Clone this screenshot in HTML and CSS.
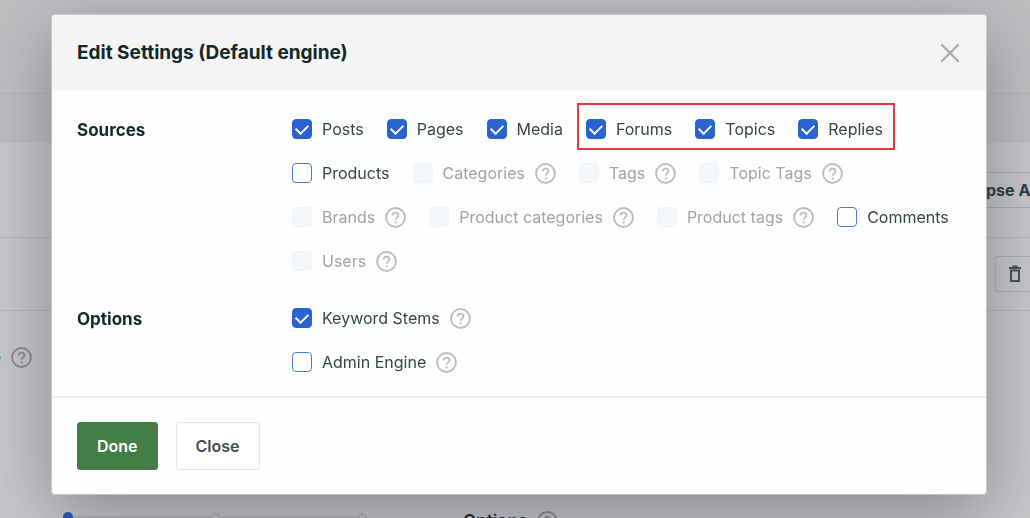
FILE: index.html
```html
<!DOCTYPE html>
<html lang="en">
<head>
<meta charset="utf-8">
<title>Edit Settings</title>
<link rel="stylesheet" href="styles.css">
</head>
<body>
<svg class="sprite" aria-hidden="true">
  <symbol id="help" viewBox="0 0 20 20">
    <circle cx="10" cy="10" r="9" fill="none" stroke="currentColor" stroke-width="1.800"/>
    <path d="M7.2 8.1C7.2 6.4 8.400 5.300 10 5.300C11.600 5.300 12.800 6.400 12.800 7.900C12.800 9.900 10.200 9.900 10.200 12.100" fill="none" stroke="currentColor" stroke-width="1.700"/>
    <circle cx="10.200" cy="14.600" r="1.100" fill="currentColor"/>
  </symbol>
</svg>

<main class="page">
  <div class="page-top"></div>
  <div class="page-bar"></div>
  <div class="page-toolbar"><a class="collapse" href="#">Collapse All</a></div>
  <div class="page-row">
    <button class="trash" type="button" aria-label="Delete">
      <svg width="14" height="18" viewBox="0 0 14 18" fill="none" stroke="currentColor" stroke-width="2"><path d="M1 3H13M4.500 1.500H9.500M3 5.500V16H11V5.500Z"/></svg>
    </button>
  </div>
  <div class="page-links"><a class="more" href="#">Default engine</a><svg class="help"><use href="#help"/></svg></div>
  <div class="page-bottom">
    <div class="track"><span class="dot current"></span><span class="rail"></span><span class="dot"></span><span class="rail"></span><span class="dot"></span></div>
    <div class="page-options">Options</div>
    <svg class="help"><use href="#help"/></svg>
  </div>
</main>

<div class="overlay">
  <section class="dialog" role="dialog" aria-labelledby="title">
    <header class="dialog-head">
      <h1 id="title">Edit Settings (Default engine)</h1>
      <button class="dismiss" type="button" aria-label="Close dialog">
        <svg width="20" height="20" viewBox="0 0 20 20" fill="none" stroke="currentColor" stroke-width="2.400" stroke-linecap="round"><path d="M2 2L18 18M18 2L2 18"/></svg>
      </button>
    </header>
    <div class="dialog-body">
      <div class="setting" role="group" aria-labelledby="sources">
        <h2 id="sources">Sources</h2>
        <div class="choices">
          <label class="choice"><input type="checkbox" checked>Posts</label>
          <label class="choice"><input type="checkbox" checked>Pages</label>
          <label class="choice"><input type="checkbox" checked>Media</label>
          <div class="marked">
            <label class="choice"><input type="checkbox" checked>Forums</label>
            <label class="choice"><input type="checkbox" checked>Topics</label>
            <label class="choice"><input type="checkbox" checked>Replies</label>
          </div>
          <label class="choice"><input type="checkbox">Products</label>
          <label class="choice off"><input type="checkbox" disabled>Categories<svg class="help"><use href="#help"/></svg></label>
          <label class="choice off"><input type="checkbox" disabled>Tags<svg class="help"><use href="#help"/></svg></label>
          <label class="choice off"><input type="checkbox" disabled>Topic Tags<svg class="help"><use href="#help"/></svg></label>
          <label class="choice off"><input type="checkbox" disabled>Brands<svg class="help"><use href="#help"/></svg></label>
          <label class="choice off"><input type="checkbox" disabled>Product categories<svg class="help"><use href="#help"/></svg></label>
          <label class="choice off"><input type="checkbox" disabled>Product tags<svg class="help"><use href="#help"/></svg></label>
          <label class="choice"><input type="checkbox">Comments</label>
          <label class="choice off"><input type="checkbox" disabled>Users<svg class="help"><use href="#help"/></svg></label>
        </div>
      </div>
      <div class="setting" role="group" aria-labelledby="options">
        <h2 id="options">Options</h2>
        <div class="choices stacked">
          <label class="choice"><input type="checkbox" checked>Keyword Stems<svg class="help"><use href="#help"/></svg></label>
          <label class="choice"><input type="checkbox">Admin Engine<svg class="help"><use href="#help"/></svg></label>
        </div>
      </div>
    </div>
    <footer class="dialog-foot">
      <button class="button primary" type="button">Done</button>
      <button class="button" type="button">Close</button>
    </footer>
  </section>
</div>
</body>
</html>
```
FILE: styles.css
```css
* { box-sizing: border-box; }
body {
  margin: 0;
  height: 100vh;
  overflow: hidden;
  background: #c6c7c9;
  color: #374645;
  font: 400 16px/20px Inter, sans-serif;
}
h1, h2 { margin: 0; color: #14282a; font-weight: 700; }
button { font: inherit; cursor: pointer; }
.sprite { position: absolute; width: 0; height: 0; }
.help { width: 21px; height: 21px; flex: none; color: #bcbebe; }

/* Page behind the dialog */
.page { height: 100vh; overflow: hidden; }
.page-top { height: 94px; background: #bebfc1; border-bottom: 1px solid #b5b5b8; }
.page-bar { height: 49px; background: #bebec1; }
.page-toolbar {
  height: 95px;
  padding-top: 29px;
  border-bottom: 1px solid #b5b5b8;
  display: flex;
  justify-content: flex-end;
  align-items: flex-start;
}
.collapse {
  margin-right: -16px;
  width: 180px;
  height: 36px;
  padding-right: 6px;
  border: 1px solid #a9aaac;
  color: #2b3b3e;
  font-weight: 700;
  line-height: 34px;
  text-align: right;
  text-decoration: none;
}
.page-row {
  height: 73px;
  border-bottom: 1px solid #b5b5b8;
  display: flex;
  justify-content: flex-end;
  align-items: center;
}
.trash {
  width: 40px;
  height: 36px;
  margin-right: -5px;
  padding: 0;
  border: 1px solid #adaeb1;
  border-radius: 3px;
  background: none;
  color: #46524f;
  display: grid;
  place-items: center;
}
.page-links {
  height: 92px;
  display: flex;
  align-items: center;
  gap: 10px;
  margin-left: -121px;
}
.more { width: 122px; text-align: right; color: #2b5a9e; text-decoration: none; }
.page .help { color: #88898b; }
.page-bottom { height: 232px; display: flex; padding-left: 63px; padding-top: 108px; }
.track { display: flex; align-items: center; width: 304px; height: 12px; }
.dot { width: 9px; height: 9px; border: 2px solid #b0b1b6; border-radius: 50%; }
.dot.current { width: 10px; height: 10px; background: #2458bc; border-color: #2458bc; }
.rail { flex: 1; height: 2px; background: #b4b5ba; }
.page-options { margin: 0 10px 0 96px; color: #14282a; font-size: 17px; font-weight: 600; }

/* Dialog */
.overlay { position: fixed; inset: 0; padding: 15px 44px 0 52px; }
.dialog {
  border-radius: 3px;
  background: #fefefe;
  box-shadow: 0 0 0 1px rgba(225, 225, 228, .5), 0 20px 70px rgba(50, 50, 70, .42);
}
.dialog-head {
  display: flex;
  align-items: center;
  justify-content: space-between;
  height: 76px;
  padding: 0 25px;
  border-radius: 3px 3px 0 0;
  background: #f4f4f4;
}
h1 { font-size: 19px; line-height: 24px; }
h2 { font-size: 17px; line-height: 22px; }
.dismiss { padding: 0; border: 0; background: none; color: #a9abae; display: grid; width: 22px; height: 22px; place-items: center; }
.dialog-body { display: grid; gap: 37px; padding: 28px 25px 24px; }
.setting { display: grid; grid-template-columns: 215px 1fr; align-items: start; }
.choices { display: flex; flex-wrap: wrap; gap: 24px 23px; }
.choices.stacked { flex-direction: column; }
.choice { display: flex; align-items: center; gap: 10px; height: 20px; white-space: nowrap; }
.choice.off { color: #a0a4a4; }
.choice input {
  appearance: none;
  width: 20px;
  height: 20px;
  margin: 0;
  border: 1px solid #4a7ad8;
  border-radius: 4px;
  background: #fff;
}
.choice input:checked { border-color: #2a63d0; background: #2a63d0; display: grid; place-items: center; }
.choice input:checked::before {
  content: "";
  width: 10px;
  height: 6px;
  margin-bottom: 3px;
  border: solid #fff;
  border-width: 0 0 2px 2px;
  transform: rotate(-45deg);
}
.choice input:disabled { border-color: #f1f4f4; background: #f4f8fa; }
.marked { position: relative; display: flex; gap: 23px; }
.marked::after {
  content: "";
  position: absolute;
  inset: -16px -12px -11px -9px;
  border: 2px solid #e4363c;
  pointer-events: none;
}
.dialog-foot { display: flex; gap: 18px; padding: 24px 25px; border-top: 2px solid #e9edee; }
.button {
  height: 48px;
  padding: 0 19px;
  border: 1px solid #e2e5e5;
  border-radius: 3px;
  background: #fff;
  color: #41504f;
  font-weight: 600;
}
.primary { border-color: #427e46; background: #427e46; color: #fff; }
```
